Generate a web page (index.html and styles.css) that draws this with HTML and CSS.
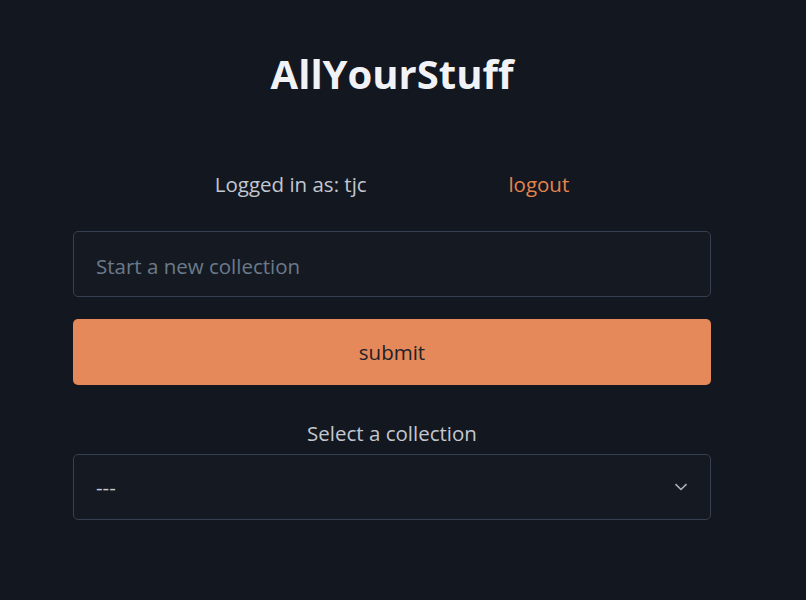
FILE: index.html
```html
<!DOCTYPE html>
<html>
<head>
<meta charset="utf-8">
<link rel="stylesheet" href="styles.css">
</head>
<body>
<div class="page">
  <main class="container">
    <h1 class="title">AllYourStuff</h1>
    <div class="session">
      <span class="user">Logged in as: tjc</span>
      <a class="logout" href="#">logout</a>
    </div>
    <form class="new-form">
      <input class="field" type="text" placeholder="Start a new collection">
      <button class="submit" type="button">submit</button>
    </form>
    <div class="select-group">
      <label class="select-label">Select a collection</label>
      <div class="select">
        <span class="select-value">---</span>
        <svg class="chevron" width="14" height="8" viewBox="0 0 14 8"><path d="M1.5 1.2 L7 6.5 L12.5 1.2" fill="none" stroke="#aab2bd" stroke-width="1.6"/></svg>
      </div>
    </div>
  </main>
</div>
</body>
</html>
```
FILE: styles.css
```css
html, body {
  margin: 0;
  padding: 0;
  background: #13171f;
}
body {
  font-family: "Open Sans", "Noto Sans", sans-serif;
  color: #c2c7d0;
  font-size: 20.5px;
}
.page {
  width: 784px;
  height: 600px;
}
.container {
  width: 638px;
  margin: 0 auto;
  padding-top: 50px;
}
.title {
  margin: 0;
  text-align: center;
  font-size: 40px;
  font-weight: 700;
  color: #f0f2f5;
  line-height: 48px;
}
.session {
  display: flex;
  justify-content: space-evenly;
  margin-top: 71px;
  line-height: 30px;
}
.logout {
  color: #e5844f;
  text-decoration: none;
}
.new-form {
  margin-top: 32px;
  display: flex;
  flex-direction: column;
  gap: 22px;
}
.field {
  box-sizing: border-box;
  height: 66px;
  width: 100%;
  background: #151a22;
  border: 1px solid #364050;
  border-radius: 5px;
  padding: 3px 22px 0;
  font: inherit;
  color: #c2c7d0;
  outline: none;
}
.field::placeholder {
  color: #6b7a8a;
}
.submit {
  height: 66px;
  width: 100%;
  background: #e5895a;
  border: none;
  border-radius: 5px;
  font: inherit;
  color: #1e2127;
}
.select-group {
  margin-top: 33px;
  display: flex;
  flex-direction: column;
  align-items: center;
}
.select-label {
  line-height: 30px;
}
.select {
  box-sizing: border-box;
  margin-top: 6px;
  width: 100%;
  height: 66px;
  border: 1px solid #364050;
  border-radius: 5px;
  background: #151a22;
  display: flex;
  align-items: center;
  justify-content: space-between;
  padding: 0 22px;
}
.select-value {
  color: #c2c7d0;
}
```
